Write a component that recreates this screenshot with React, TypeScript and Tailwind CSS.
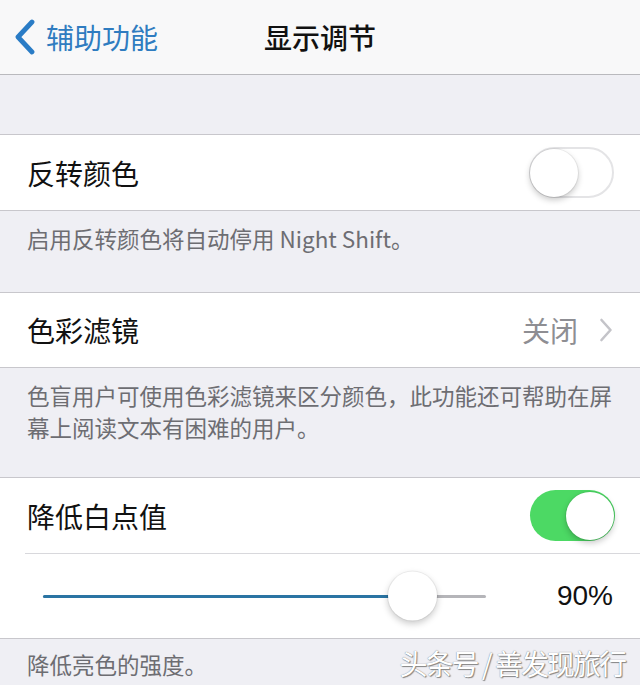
import React from "react";

const FONT = {
  fontFamily: '"Noto Sans CJK SC", "Noto Sans", "Liberation Sans", sans-serif',
};

function Toggle({ on }: { on: boolean }) {
  return (
    <div
      className={
        "relative h-[51px] w-[85px] rounded-full " +
        (on ? "bg-[#4cd964]" : "bg-white border-[2px] border-[#e4e4e6]")
      }
    >
      <div
        className={
          "absolute top-1/2 h-[48px] w-[48px] -translate-y-1/2 rounded-full bg-white shadow-[0_3px_6px_rgba(0,0,0,0.22),0_0_0_1px_rgba(0,0,0,0.06)] " +
          (on ? "right-[1px]" : "left-[-1px]")
        }
      />
    </div>
  );
}

export default function App() {
  return (
    <div className="h-[685px] w-[640px] overflow-hidden bg-[#efeff4]" style={FONT}>
      {/* navigation bar */}
      <div className="relative flex h-[75px] items-center border-b border-[#b9b9bd] bg-[#f8f8f9]">
        <div className="flex items-center pl-[14px]">
          <svg width="22" height="36" viewBox="0 0 22 36" className="mr-[10px]">
            <path
              d="M18 3 L4 18 L18 33"
              fill="none"
              stroke="#2a7cc6"
              strokeWidth="4.8"
              strokeLinecap="round"
              strokeLinejoin="round"
            />
          </svg>
          <span className="text-[28px] leading-none text-[#2f7cc0]">辅助功能</span>
        </div>
        <div className="absolute left-1/2 top-1/2 -translate-x-1/2 -translate-y-1/2 text-[28px] font-medium leading-none text-[#111]">
          显示调节
        </div>
      </div>

      {/* spacer */}
      <div className="h-[60px] border-b border-[#c8c7cc]" />

      {/* invert colours */}
      <div className="flex h-[76px] items-center justify-between border-b border-[#c8c7cc] bg-white pl-[27px] pr-[26px]">
        <span className="text-[28px] leading-none text-[#111]">反转颜色</span>
        <Toggle on={false} />
      </div>
      <div className="h-[82px] border-b border-[#c8c7cc] px-[27px] pt-[11px] text-[22.5px] leading-[32px] text-[#6d6d72]">
        启用反转颜色将自动停用 Night Shift。
      </div>

      {/* colour filters */}
      <div className="flex h-[75px] items-center justify-between border-b border-[#c8c7cc] bg-white pl-[27px] pr-[27px]">
        <span className="text-[28px] leading-none text-[#111]">色彩滤镜</span>
        <div className="flex items-center">
          <span className="text-[28px] leading-none text-[#8e8e93]">关闭</span>
          <svg width="14" height="24" viewBox="0 0 14 24" className="ml-[21px]">
            <path
              d="M2.5 2 L11.5 12 L2.5 22"
              fill="none"
              stroke="#c4c4c9"
              strokeWidth="2.6"
              strokeLinecap="round"
              strokeLinejoin="round"
            />
          </svg>
        </div>
      </div>
      <div className="h-[110px] border-b border-[#c8c7cc] pl-[27px] pr-[20px] pt-[11px] text-[22.5px] leading-[32px] text-[#6d6d72]">
        色盲用户可使用色彩滤镜来区分颜色，此功能还可帮助在屏幕上阅读文本有困难的用户。
      </div>

      {/* reduce white point */}
      <div className="border-b border-[#c8c7cc] bg-white">
        <div className="flex h-[75px] items-center justify-between pl-[27px] pr-[25px]">
          <span className="text-[28px] leading-none text-[#111]">降低白点值</span>
          <Toggle on={true} />
        </div>
        <div className="ml-[25px] flex h-[85px] items-center border-t border-[#d8d8dc] pr-[27px]">
          <div className="relative ml-[18px] h-[3px] w-[443px] rounded-full bg-[#b5b5b9]">
            <div className="absolute left-0 top-0 h-[3px] w-[369px] rounded-full bg-[#2a74a3]" />
            <div className="absolute left-[345px] top-1/2 h-[49px] w-[49px] -translate-y-1/2 rounded-full bg-white shadow-[0_3px_7px_rgba(0,0,0,0.22),0_0_0_1px_rgba(0,0,0,0.05)]" />
          </div>
          <span
            className="ml-auto text-[28px] leading-none text-[#111]"
            style={{ fontFamily: '"Liberation Sans", "Noto Sans", sans-serif' }}
          >
            90%
          </span>
        </div>
      </div>
      <div className="flex h-[47px] items-center justify-between pl-[27px] pr-[15px]">
        <span className="pt-[4px] text-[22.5px] leading-none text-[#6d6d72]">降低亮色的强度。</span>
        <span className="text-[28px] leading-none tracking-[-2px] text-white [text-shadow:0_0_1px_#666,1px_1px_1px_#888]">
          头条号 / 善发现旅行
        </span>
      </div>
    </div>
  );
}
